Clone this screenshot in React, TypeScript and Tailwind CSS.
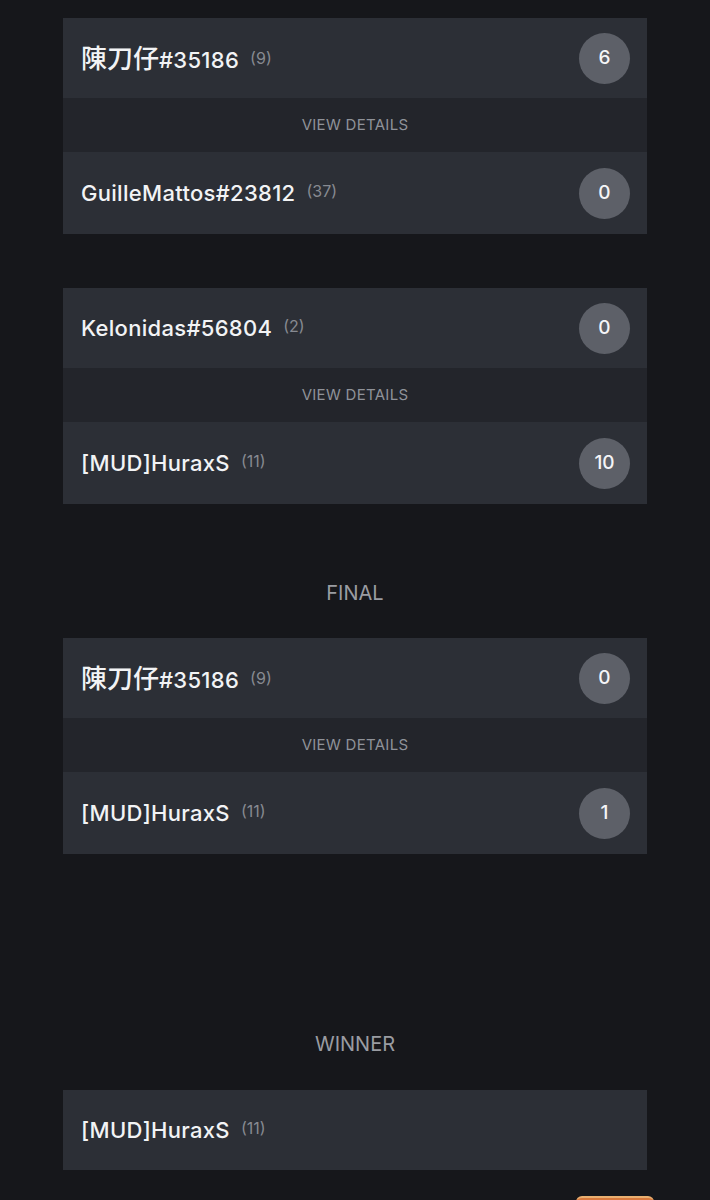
const font = { fontFamily: 'Inter, "Noto Sans CJK TC", "Noto Sans", sans-serif' };

type Player = { name: string; cjk?: string; seed: number; score?: number };

const matches: { top: Player; bottom: Player }[] = [
  { top: { cjk: '陳刀仔', name: '#35186', seed: 9, score: 6 }, bottom: { name: 'GuilleMattos#23812', seed: 37, score: 0 } },
  { top: { name: 'Kelonidas#56804', seed: 2, score: 0 }, bottom: { name: '[MUD]HuraxS', seed: 11, score: 10 } },
];

const finalMatch = { top: { cjk: '陳刀仔', name: '#35186', seed: 9, score: 0 }, bottom: { name: '[MUD]HuraxS', seed: 11, score: 1 } };

function PlayerRow({ player, tall }: { player: Player; tall?: boolean }) {
  return (
    <div className={`${tall ? 'h-[82px]' : 'h-[80px]'} flex items-center justify-between pl-[18px] pr-[17px] bg-[#2c2f36]`}>
      <div className="flex items-baseline">
        <span className="text-[22px] font-medium text-[#f2f3f5] tracking-[0.3px]">
          {player.cjk && <span className="text-[26px] tracking-[0px]">{player.cjk}</span>}
          {player.name}
        </span>
        <span className="ml-[11px] text-[16px] text-[#878a91] relative -top-[4px]">({player.seed})</span>
      </div>
      {player.score !== undefined && (
        <div className="w-[51px] h-[51px] rounded-full bg-[#5d6068] flex items-center justify-center text-[19px] font-medium text-[#f5f5f7]">
          {player.score}
        </div>
      )}
    </div>
  );
}

function Match({ top, bottom }: { top: Player; bottom: Player }) {
  return (
    <div>
      <PlayerRow player={top} />
      <div className="h-[54px] flex items-center justify-center bg-[#23252b] text-[15px] uppercase tracking-[0.3px] text-[#8f9299]">
        View Details
      </div>
      <PlayerRow player={bottom} tall />
    </div>
  );
}

function Label({ children }: { children: string }) {
  return <div className="text-center text-[20px] leading-[24px] uppercase text-[#9a9ca2]">{children}</div>;
}

export default function App() {
  return (
    <div style={font} className="min-h-screen w-full bg-[#16171b] pt-[18px] px-[63px] overflow-hidden">
      <div className="flex flex-col gap-[54px]">
        {matches.map((m, i) => (
          <Match key={i} top={m.top} bottom={m.bottom} />
        ))}
      </div>

      <div className="mt-[77px] mb-[33px]">
        <Label>Final</Label>
      </div>
      <Match top={finalMatch.top} bottom={finalMatch.bottom} />

      <div className="mt-[178px] mb-[34px]">
        <Label>Winner</Label>
      </div>
      <PlayerRow player={{ name: '[MUD]HuraxS', seed: 11 }} />

      <div className="flex justify-end mt-[26px]">
        <div className="w-[78px] h-[36px] rounded-[6px] bg-[#d97a3e] border-t-2 border-[#e9b071] -mr-[7px]" />
      </div>
    </div>
  );
}
